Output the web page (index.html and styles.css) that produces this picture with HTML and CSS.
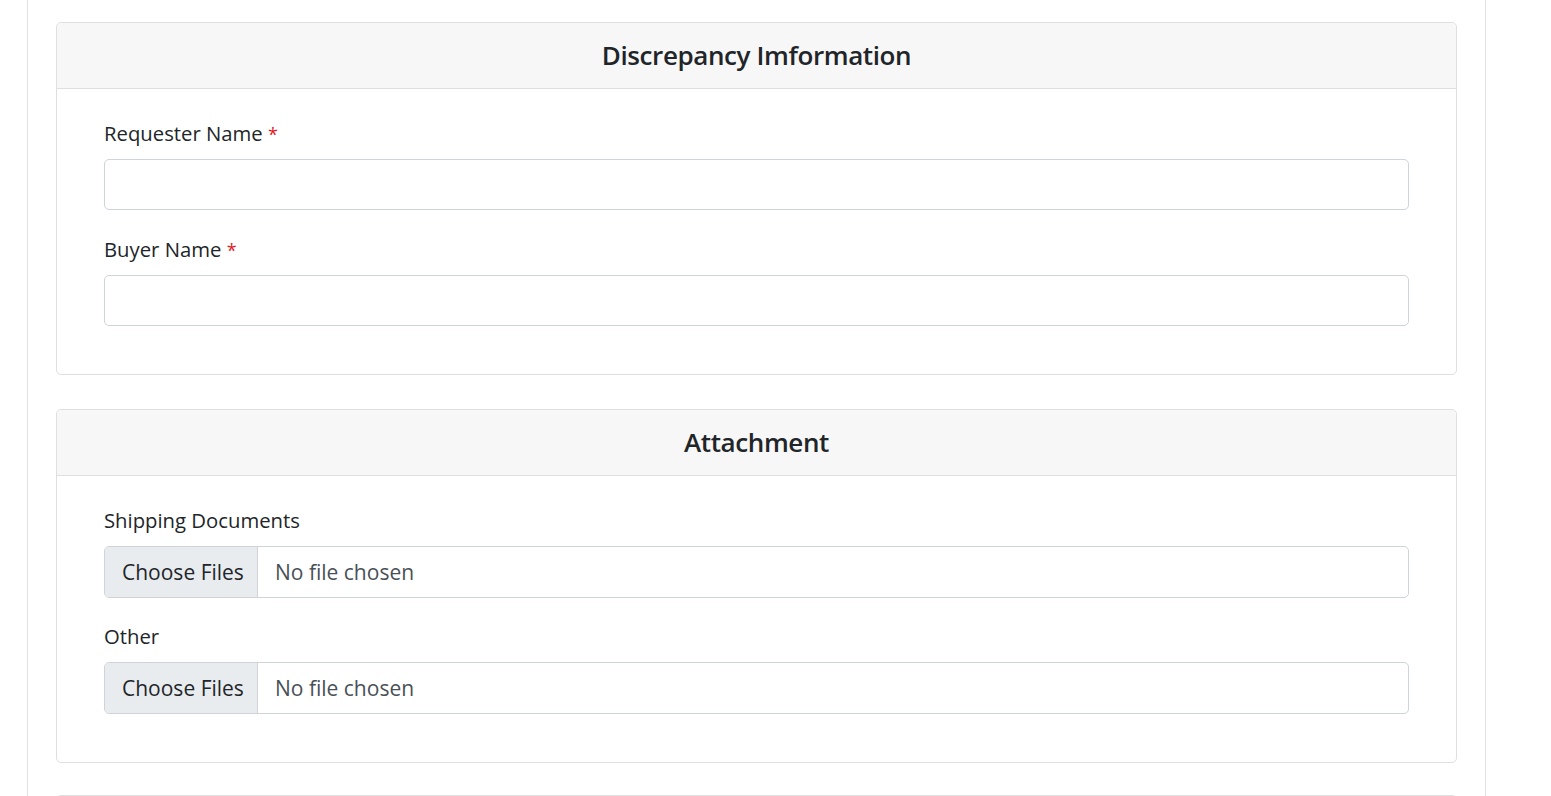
FILE: index.html
```html
<!DOCTYPE html>
<html lang="en">
<head>
<meta charset="utf-8">
<title>Discrepancy Form</title>
<link rel="stylesheet" href="styles.css">
</head>
<body>
<div class="page">
  <section class="card">
    <header class="card-header"><h2>Discrepancy Imformation</h2></header>
    <div class="card-body">
      <div class="group">
        <label class="label">Requester Name <span class="req">*</span></label>
        <input class="field" type="text">
      </div>
      <div class="group">
        <label class="label">Buyer Name <span class="req">*</span></label>
        <input class="field" type="text">
      </div>
    </div>
  </section>
  <section class="card card-files">
    <header class="card-header"><h2>Attachment</h2></header>
    <div class="card-body">
      <div class="group">
        <label class="label">Shipping Documents</label>
        <div class="file"><span class="file-btn">Choose Files</span><span class="file-name">No file chosen</span></div>
      </div>
      <div class="group">
        <label class="label">Other</label>
        <div class="file"><span class="file-btn">Choose Files</span><span class="file-name">No file chosen</span></div>
      </div>
    </div>
  </section>
  <section class="card card-empty"></section>
</div>
</body>
</html>
```
FILE: styles.css
```css
* { box-sizing: border-box; }
html, body { margin: 0; padding: 0; background: #fff; }
body {
  font-family: "Open Sans", "Noto Sans", "Liberation Sans", sans-serif;
  color: #212529;
  overflow: hidden;
  height: 796px;
}
.page {
  margin-left: 27px;
  width: 1459px;
  min-height: 796px;
  border-left: 1px solid #dee2e6;
  border-right: 1px solid #dee2e6;
  padding: 22px 28px 0 28px;
}
.card {
  border: 1px solid #dfdfdf;
  border-radius: 5px;
  margin-bottom: 34px;
  background: #fff;
}
.card-files { margin-bottom: 32px; }
.card-empty { height: 120px; }
.card-header {
  height: 66px;
  background: #f7f7f7;
  border-bottom: 1px solid #dfdfdf;
  border-radius: 5px 5px 0 0;
  display: flex;
  align-items: center;
  justify-content: center;
}
.card-header h2 {
  margin: 0;
  font-size: 26px;
  font-weight: 600;
  line-height: 1.2;
  letter-spacing: -0.4px;
}
.card-body {
  padding: 28px 47px 48px 47px;
}
.group + .group { margin-top: 23px; }
.card-files .group + .group { margin-top: 22px; }
.label {
  display: block;
  height: 32px;
  font-size: 20.3px;
  line-height: 32px;
  margin-bottom: 10px;
  white-space: nowrap;
}
.req { color: #e3161f; font-size: 18px; line-height: 1; }
.field {
  display: block;
  width: 100%;
  height: 51px;
  border: 1px solid #ced4da;
  border-radius: 5px;
  background: #fff;
  font: inherit;
  font-size: 20px;
  padding: 0 16px;
  outline: none;
}
.file {
  display: flex;
  height: 52px;
  border: 1px solid #ced4da;
  border-radius: 5px;
  overflow: hidden;
  font-size: 21px;
}
.file-btn {
  display: flex;
  align-items: center;
  width: 153px;
  padding: 0 17px;
  background: #e9ecef;
  color: #212529;
  border-right: 1px solid #ced4da;
  white-space: nowrap;
}
.file-name {
  display: flex;
  align-items: center;
  padding-left: 17px;
  color: #495057;
  white-space: nowrap;
}
```
